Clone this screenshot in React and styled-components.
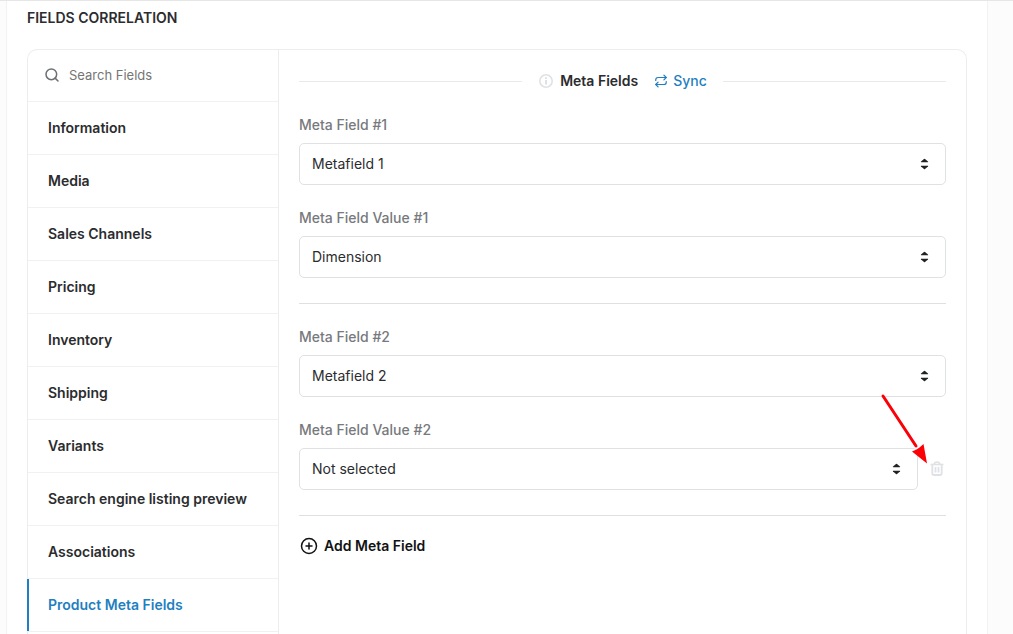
import React from 'react'
import styled, { createGlobalStyle } from 'styled-components'
import { CirclePlus, Repeat, Search } from 'lucide-react'

const sections = [
  'Information',
  'Media',
  'Sales Channels',
  'Pricing',
  'Inventory',
  'Shipping',
  'Variants',
  'Search engine listing preview',
  'Associations',
  'Product Meta Fields',
]

const InfoIcon = () => (
  <svg width='14' height='14' viewBox='0 0 14 14' fill='none' aria-hidden='true'>
    <circle cx='7' cy='7' r='6.2' stroke='#dfe2e5' strokeWidth='1.6' />
    <path d='M7 3.2v1.9M7 6v4.6' stroke='#dfe2e5' strokeWidth='2' />
  </svg>
)

const SortIcon = () => (
  <svg width='9' height='12' viewBox='0 0 9 12' fill='#202223' aria-hidden='true'>
    <path d='M1.3 4.2 C.8 4.2.8 3.8 1 3.6 L4 1 Q4.5.6 5 1 L8 3.6 C8.2 3.8 8.2 4.2 7.7 4.2Z' />
    <path d='M1.3 7.8 C.8 7.8.8 8.2 1 8.4 L4 11 Q4.5 11.4 5 11 L8 8.4 C8.2 8.2 8.2 7.8 7.7 7.8Z' />
  </svg>
)

const TrashIcon = () => (
  <svg width='14' height='16' viewBox='0 0 14 16' fill='none' stroke='#dfe2e5' aria-hidden='true'>
    <path d='M.5 3.5h13' strokeWidth='1.6' />
    <path d='M4.3 3.3C4.3.2 9.7.2 9.7 3.3' strokeWidth='1.6' />
    <path d='M2.3 3.5v8.8q0 1.7 1.7 1.7h6q1.7 0 1.7-1.7V3.5' strokeWidth='1.8' />
    <path d='M5.5 6v5.4M8.5 6v5.4' strokeWidth='1.8' />
  </svg>
)

const SelectField = ({ id, label, value, children }) => (
  <Field>
    <label htmlFor={id}>{label}</label>
    <FieldRow>
      <SelectBox>
        <select id={id} defaultValue={value}>
          <option>{value}</option>
        </select>
        <SortIcon />
      </SelectBox>
      {children}
    </FieldRow>
  </Field>
)

export default function App() {
  return (
    <>
      <GlobalStyle />
      <Card>
        <h1>Fields correlation</h1>
        <Panel>
          <Sidebar>
            <SearchBox>
              <Search size={16} strokeWidth={2.3} aria-hidden='true' />
              <input type='text' placeholder='Search Fields' aria-label='Search Fields' />
            </SearchBox>
            <nav>
              {sections.map((name) => (
                <NavItem key={name} href='#' $active={name === 'Product Meta Fields'}>
                  {name}
                </NavItem>
              ))}
            </nav>
          </Sidebar>

          <Content>
            <Heading>
              <InfoIcon />
              <h2>Meta Fields</h2>
              <SyncButton type='button'>
                <Repeat size={14} strokeWidth={2.1} aria-hidden='true' />
                Sync
              </SyncButton>
            </Heading>

            <SelectField id='field-1' label='Meta Field #1' value='Metafield 1' />
            <SelectField id='value-1' label='Meta Field Value #1' value='Dimension' />
            <Divider />
            <SelectField id='field-2' label='Meta Field #2' value='Metafield 2' />
            <SelectField id='value-2' label='Meta Field Value #2' value='Not selected'>
              <DeleteButton type='button' aria-label='Delete'>
                <TrashIcon />
              </DeleteButton>
              <Pointer width='48' height='72' viewBox='0 0 48 72' aria-hidden='true'>
                <path d='M3 3 36 53' stroke='#fb0007' strokeWidth='3' strokeLinecap='round' />
                <path d='M47 70.5 32 58.5 36.5 56.5 39.5 54.5 43.5 51Z' fill='#fb0007' />
              </Pointer>
            </SelectField>
            <Divider />

            <AddButton type='button'>
              <CirclePlus size={18} strokeWidth={2} aria-hidden='true' />
              Add Meta Field
            </AddButton>
          </Content>
        </Panel>
      </Card>
    </>
  )
}

const GlobalStyle = createGlobalStyle`
  * {
    box-sizing: border-box;
  }
  body {
    margin: 0;
    background: #fcfcfc;
    border-top: 1px solid #e6e6e6;
    color: #2b2c2e;
    font-family: Inter, 'Liberation Sans', sans-serif;
    font-size: 14px;
    line-height: 22px;
  }
  button, input, select {
    font: inherit;
    color: inherit;
  }
  button {
    padding: 0;
    border: 0;
    background: none;
    cursor: pointer;
  }
`

const Card = styled.main`
  display: flex;
  flex-direction: column;
  min-height: calc(100vh - 1px);
  margin: 0 25px 0 6px;
  padding: 6px 20px 0;
  background: #fff;
  border: 1px solid #f2f2f2;
  border-width: 0 1px;

  h1 {
    margin: 0 0 20px;
    font-size: 14px;
    font-weight: 600;
    text-transform: uppercase;
  }
`

const Panel = styled.section`
  display: flex;
  flex: 1;
  border: 1px solid #ededed;
  border-bottom: 0;
  border-radius: 10px 10px 0 0;
`

const Sidebar = styled.aside`
  flex: 0 0 251px;
  min-width: 0;
  border-right: 1px solid #ededed;
`

const SearchBox = styled.div`
  display: flex;
  align-items: center;
  gap: 9px;
  height: 52px;
  padding: 0 16px 1px;
  border-bottom: 1px solid #f1f1f1;
  color: #6d7175;

  svg {
    flex: none;
  }
  input {
    width: 100%;
    min-width: 0;
    padding: 0;
    border: 0;
    outline: 0;
    background: none;
    font-size: 13px;
  }
  input::placeholder {
    color: #757575;
  }
`

const NavItem = styled.a`
  position: relative;
  display: block;
  padding: 15px 20px;
  border-bottom: 1px solid #f1f1f1;
  color: ${({ $active }) => ($active ? '#1f7fc1' : '#2b2c2e')};
  font-weight: 600;
  text-decoration: none;

  &::before {
    content: '';
    display: ${({ $active }) => ($active ? 'block' : 'none')};
    position: absolute;
    inset: 0 auto 0 -1px;
    width: 2px;
    background: #1f7fc1;
  }
`

const Content = styled.div`
  flex: 1;
  min-width: 0;
  padding: 20px;
`

const Heading = styled.div`
  display: flex;
  align-items: center;
  margin-bottom: 22px;

  &::before,
  &::after {
    content: '';
    flex: 1;
    height: 1px;
    background: #e9e9e9;
  }
  &::before {
    margin-right: 17px;
  }
  &::after {
    margin-left: 16px;
  }
  h2 {
    margin: 0 16px 0 7px;
    font-size: 14px;
    font-weight: 600;
  }
`

const SyncButton = styled.button`
  display: flex;
  align-items: center;
  gap: 5px;
  color: #1f7fc1;
  font-weight: 500;
`

const Field = styled.div`
  & + & {
    margin-top: 22px;
  }
  label {
    display: block;
    margin-bottom: 7px;
    color: #77797d;
    font-weight: 500;
  }
`

const FieldRow = styled.div`
  position: relative;
  display: flex;
  align-items: center;
  gap: 10px;
`

const SelectBox = styled.div`
  display: grid;
  flex: 1;
  align-items: center;

  select,
  svg {
    grid-area: 1 / 1;
  }
  select {
    width: 100%;
    height: 42px;
    padding: 0 36px 0 12px;
    border: 1px solid #dfe1e3;
    border-radius: 5px;
    background: #fff;
    appearance: none;
  }
  svg {
    justify-self: end;
    margin-right: 17px;
    pointer-events: none;
  }
`

const DeleteButton = styled.button`
  display: flex;
  justify-content: center;
  width: 18px;
`

const Pointer = styled.svg`
  position: absolute;
  top: -55px;
  right: 18px;
  pointer-events: none;
`

const Divider = styled.hr`
  height: 1px;
  margin: 25px 0 22px;
  border: 0;
  background: #e0e0e0;
`

const AddButton = styled.button`
  display: flex;
  align-items: center;
  gap: 6px;
  margin-top: -3px;
  padding-left: 1px;
  color: #111213;
  font-weight: 600;
`
